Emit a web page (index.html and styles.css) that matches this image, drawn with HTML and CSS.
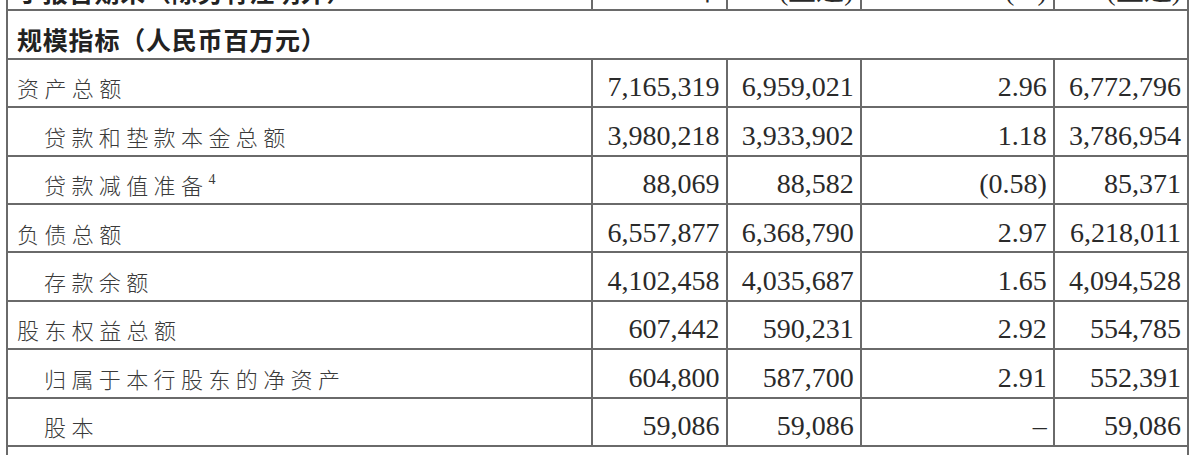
FILE: index.html
```html
<!DOCTYPE html>
<html lang="zh-CN">
<head>
<meta charset="utf-8">
<title>规模指标</title>
<link rel="stylesheet" href="styles.css">
</head>
<body>
<div class="page">
  <table class="fin">
    <colgroup>
      <col class="c-label"><col class="c-num"><col class="c-num"><col class="c-chg"><col class="c-num">
    </colgroup>
    <tr class="head">
      <td class="label strong">于报告期末（除另有注明外）</td>
      <td class="num">2023年</td>
      <td class="num">(重述)</td>
      <td class="num">+/-(%)</td>
      <td class="num">(重述)</td>
    </tr>
    <tr class="section"><td colspan="5" class="label strong">规模指标（人民币百万元）</td></tr>
    <tr><td class="label">资产总额</td><td class="num">7,165,319</td><td class="num">6,959,021</td><td class="num">2.96</td><td class="num">6,772,796</td></tr>
    <tr><td class="label sub">贷款和垫款本金总额</td><td class="num">3,980,218</td><td class="num">3,933,902</td><td class="num">1.18</td><td class="num">3,786,954</td></tr>
    <tr><td class="label sub">贷款减值准备<sup class="note">4</sup></td><td class="num">88,069</td><td class="num">88,582</td><td class="num">(0.58)</td><td class="num">85,371</td></tr>
    <tr><td class="label">负债总额</td><td class="num">6,557,877</td><td class="num">6,368,790</td><td class="num">2.97</td><td class="num">6,218,011</td></tr>
    <tr><td class="label sub">存款余额</td><td class="num">4,102,458</td><td class="num">4,035,687</td><td class="num">1.65</td><td class="num">4,094,528</td></tr>
    <tr><td class="label">股东权益总额</td><td class="num">607,442</td><td class="num">590,231</td><td class="num">2.92</td><td class="num">554,785</td></tr>
    <tr><td class="label sub">归属于本行股东的净资产</td><td class="num">604,800</td><td class="num">587,700</td><td class="num">2.91</td><td class="num">552,391</td></tr>
    <tr><td class="label sub">股本</td><td class="num">59,086</td><td class="num">59,086</td><td class="num">–</td><td class="num">59,086</td></tr>
    <tr class="section"><td colspan="5" class="label strong">&nbsp;</td></tr>
  </table>
</div>
</body>
</html>
```

FILE: styles.css
```css
html, body {
  margin: 0;
  padding: 0;
  background: #ffffff;
  overflow: hidden;
}

.page {
  width: 1200px;
  height: 455px;
  overflow: hidden;
  padding-left: 6px;
  box-sizing: border-box;
}

.fin {
  border-collapse: collapse;
  table-layout: fixed;
  width: 1183px;
  margin-top: -39px;
  color: #2e2e2e;
}

.c-label { width: 585px; }
.c-num { width: 134px; }
.c-chg { width: 193px; }

.fin td {
  border: 2px solid #6a6a6a;
  height: 37.4px;
  padding: 9px 6px 0 9px;
  line-height: 30px;
  vertical-align: middle;
  white-space: nowrap;
  overflow: hidden;
}

.fin .label {
  font-family: "Noto Sans CJK SC", "Noto Sans CJK TC", sans-serif;
  font-weight: 300;
  font-size: 22px;
  letter-spacing: 5.4px;
  color: #3a3a3a;
}

.fin .label.sub {
  padding-left: 36px;
}

.fin .label.strong {
  font-weight: 700;
  font-size: 25px;
  letter-spacing: 0.8px;
  color: #222222;
}

.fin .num {
  font-family: "Liberation Serif", "Times New Roman", serif;
  font-size: 28px;
  text-align: right;
  color: #2a2a2a;
  padding-right: 6px;
  padding-left: 4px;
}

.note {
  font-family: "Liberation Serif", serif;
  font-size: 14px;
  letter-spacing: 0;
  vertical-align: 10px;
  line-height: 0;
}
```
